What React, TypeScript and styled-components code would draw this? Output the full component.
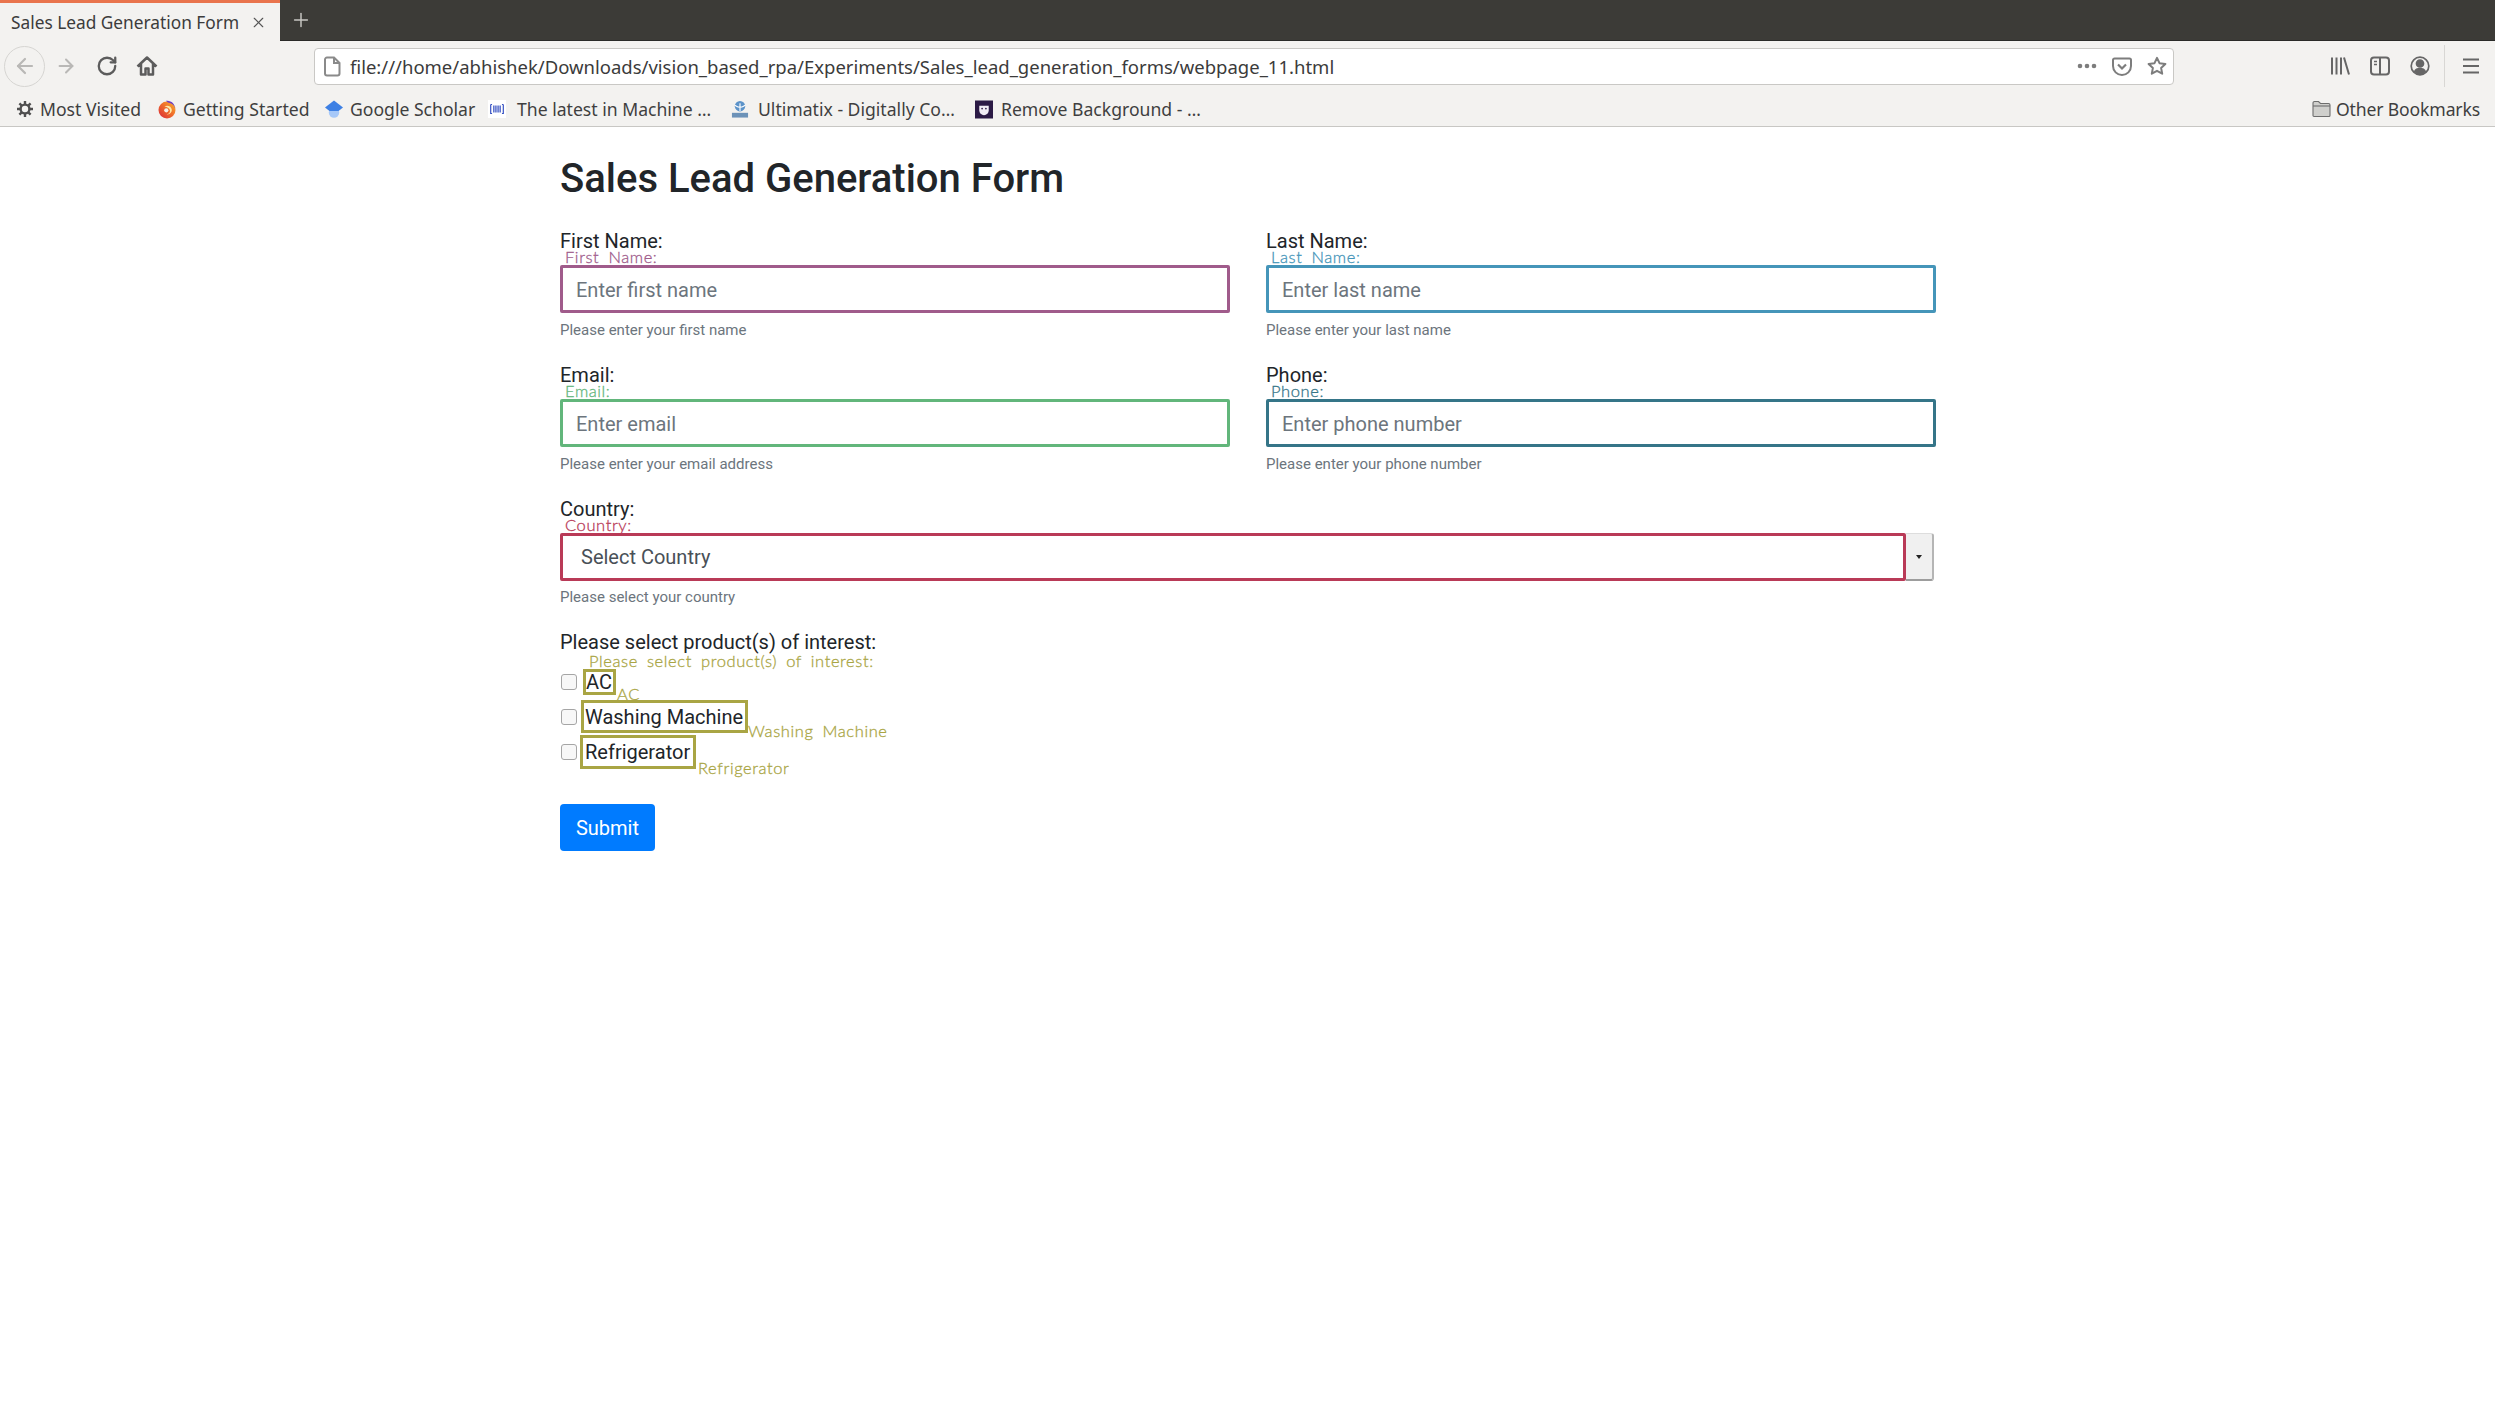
import React from "react";
import styled, { createGlobalStyle } from "styled-components";
import { ArrowLeft, ArrowRight, RotateCw, X, Plus } from "lucide-react";

const Global = createGlobalStyle`
  html, body { margin: 0; padding: 0; background: #fff; }
  body { font-family: Roboto, "Liberation Sans", sans-serif; color: #212529; }
  * { box-sizing: border-box; }
`;

const uiFont = `"Noto Sans", "Open Sans", sans-serif`;

const Page = styled.div`
  width: 2495px;
  height: 1416px;
  overflow: hidden;
  background: #fff;
`;

const TabStrip = styled.div`
  height: 41px;
  background: #3c3b37;
  border-bottom: 1px solid #2a2a28;
  display: flex;
  align-items: stretch;
`;

const Tab = styled.div`
  width: 280px;
  height: 41px;
  background: #f3f2f0;
  border-top: 3px solid #e9744d;
  display: flex;
  align-items: center;
  padding: 0 13px 0 11px;
  justify-content: space-between;
  font: 17.3px ${uiFont};
  color: #3c3c3c;
  white-space: nowrap;
`;

const NewTab = styled.div`
  width: 41px;
  display: flex;
  align-items: center;
  justify-content: center;
  color: #c8c7c3;
`;

const NavBar = styled.div`
  height: 46px;
  background: #f3f2f0;
  display: flex;
  align-items: center;
  padding: 4px 16px 0 4px;
`;

const BackButton = styled.div`
  width: 41px;
  height: 41px;
  border-radius: 50%;
  border: 1px solid #d6d5d2;
  display: flex;
  align-items: center;
  justify-content: center;
  color: #b9b8b6;
`;

const NavIcon = styled.div<{ $ml: number; $color?: string }>`
  width: 22px;
  height: 22px;
  margin-left: ${(p) => p.$ml}px;
  display: flex;
  align-items: center;
  justify-content: center;
  color: ${(p) => p.$color || "#5c5c5c"};
`;

const UrlBar = styled.div`
  width: 1860px;
  height: 37px;
  margin-left: 156px;
  background: #fff;
  border: 1px solid #c9c8c5;
  border-radius: 4px;
  display: flex;
  align-items: center;
  padding: 0 6px 0 9px;
`;

const UrlText = styled.div`
  flex: 1;
  margin-left: 9px;
  font: 18.5px ${uiFont};
  color: #3b3b3b;
  white-space: nowrap;
`;

const UrlIcon = styled.div<{ $ml: number }>`
  margin-left: ${(p) => p.$ml}px;
  display: flex;
  color: #7d7d7d;
`;

const ToolGroup = styled.div`
  margin-left: auto;
  display: flex;
  align-items: center;
  color: #666;
`;

const ToolIcon = styled.div<{ $ml: number }>`
  margin-left: ${(p) => p.$ml}px;
  display: flex;
`;

const ToolDivider = styled.div`
  width: 1px;
  height: 42px;
  background: #d8d7d4;
  margin-left: 14px;
`;

const BookmarkBar = styled.div`
  height: 40px;
  background: #f3f2f0;
  border-bottom: 1px solid #c8c7c4;
  display: flex;
  align-items: center;
  padding: 5px 15px 0 16px;
  font: 17.6px ${uiFont};
  color: #3f3f3f;
`;

const Bookmark = styled.div<{ $w: number }>`
  width: ${(p) => p.$w}px;
  display: flex;
  align-items: center;
  white-space: nowrap;
  overflow: visible;
`;

const BookmarkIcon = styled.span<{ $mr: number }>`
  width: 18px;
  height: 18px;
  margin-right: ${(p) => p.$mr}px;
  display: flex;
  flex: none;
  align-items: center;
`;

const Other = styled.div`
  margin-left: auto;
  display: flex;
  align-items: center;
  gap: 5px;
  white-space: nowrap;
  letter-spacing: -0.15px;
`;

const Form = styled.form`
  width: 1376px;
  margin-left: 560px;
  padding-top: 28px;
`;

const Title = styled.h2`
  margin: 0 0 23px;
  font: 500 40px/48px Roboto, sans-serif;
  color: #212529;
`;

const Grid = styled.div`
  display: grid;
  grid-template-columns: 670px 670px;
  column-gap: 36px;
`;

const Field = styled.div<{ $mb?: number }>`
  position: relative;
  margin-bottom: ${(p) => p.$mb ?? 19}px;
`;

const Label = styled.label<{ $mb?: number }>`
  display: block;
  font: 20px/30px Roboto, sans-serif;
  color: #212529;
  margin-bottom: ${(p) => p.$mb ?? 9}px;
`;

const Annotation = styled.span<{ $color: string }>`
  position: absolute;
  left: 5px;
  top: 22px;
  font: 300 16.5px/18px Lato, sans-serif;
  letter-spacing: 0.6px;
  word-spacing: 4px;
  color: ${(p) => p.$color};
  -webkit-text-stroke: 0.3px ${(p) => p.$color};
  white-space: nowrap;
`;

const TextInput = styled.input<{ $color: string }>`
  display: block;
  width: 100%;
  height: 48px;
  border: 3px solid ${(p) => p.$color};
  padding: 2px 13px 0;
  font: 20px Roboto, sans-serif;
  color: #495057;
  background: #fff;
  border-radius: 2px;
  outline: none;
  &::placeholder { color: #6c757d; opacity: 1; }
`;

const Help = styled.small<{ $mt?: number }>`
  display: block;
  margin-top: ${(p) => p.$mt ?? 7}px;
  font: 15px/21px Roboto, sans-serif;
  color: #6c757d;
`;

const SelectRow = styled.div`
  display: flex;
  width: 1374px;
  height: 48px;
`;

const SelectBox = styled.div<{ $color: string }>`
  flex: 1;
  border: 3px solid ${(p) => p.$color};
  border-radius: 2px;
  display: flex;
  align-items: center;
  padding-left: 18px;
  font: 20px Roboto, sans-serif;
  color: #495057;
`;

const Caret = styled.div`
  width: 28px;
  background: #f0f0f0;
  border-top: 1px solid #ddd;
  border-right: 2px solid #b5b5b5;
  border-bottom: 2px solid #9d9d9d;
  border-radius: 0 3px 3px 0;
  display: flex;
  align-items: center;
  justify-content: center;
  &::after {
    content: "";
    border-left: 3px solid transparent;
    border-right: 3px solid transparent;
    border-top: 4px solid #222;
  }
`;

const Products = styled.div`
  position: relative;
`;

const CheckRow = styled.div<{ $gap: number }>`
  display: flex;
  align-items: center;
  height: 35px;
  gap: ${(p) => p.$gap}px;
`;

const Check = styled.input`
  appearance: none;
  width: 16px;
  height: 16px;
  margin: 0 0 0 1px;
  flex: none;
  border: 1px solid #a5a5a5;
  border-radius: 3px;
  background: #f7f7f7;
`;

const CheckLabel = styled.label<{ $w: number; $h: number; $pad: number }>`
  position: relative;
  width: ${(p) => p.$w}px;
  height: ${(p) => p.$h}px;
  border: 3px solid #a9a544;
  padding-left: ${(p) => p.$pad}px;
  display: flex;
  align-items: center;
  font: 20px Roboto, sans-serif;
  color: #212529;
  white-space: nowrap;
`;

const SideNote = styled.span<{ $top: number; $left: number }>`
  position: absolute;
  left: calc(100% + ${(p) => p.$left}px);
  top: ${(p) => p.$top}px;
  font: 300 16.5px/18px Lato, sans-serif;
  letter-spacing: 0.6px;
  word-spacing: 4px;
  color: #a9a544;
  -webkit-text-stroke: 0.3px #a9a544;
  white-space: nowrap;
`;

const ProductNote = styled(Annotation)`
  left: 29px;
  top: 25px;
`;

const Submit = styled.button`
  display: block;
  margin-top: 35px;
  width: 95px;
  height: 47px;
  background: #007bff;
  color: #fff;
  border: 0;
  border-radius: 4px;
  font: 20px Roboto, sans-serif;
`;

const Svg = ({ s = 20, vb = "0 0 20 20", children }: { s?: number; vb?: string; children: React.ReactNode }) => (
  <svg width={s} height={s} viewBox={vb} fill="none" stroke="currentColor" strokeWidth="2">{children}</svg>
);

const HomeIcon = () => (
  <Svg s={22} vb="0 0 22 22">
    <path d="M1.500 11.500 11 2.500l9.500 9M5 9v10.500h4.500v-6h3v6H17V9" strokeLinejoin="round" strokeWidth="2.500" />
  </Svg>
);
const PageIcon = () => (
  <svg width="17" height="21" viewBox="0 0 17 21" fill="none" stroke="#8a8a8a" strokeWidth="2">
    <path d="M3 1.500h7l5.500 5.500v10.500a2 2 0 0 1-2 2H3a2 2 0 0 1-2-2v-14a2 2 0 0 1 2-2ZM10 1.500V7h5.500" />
  </svg>
);
const Dots = () => (
  <svg width="20" height="6" viewBox="0 0 20 6" fill="#7d7d7d"><circle cx="3" cy="3" r="2.300" /><circle cx="10" cy="3" r="2.300" /><circle cx="17" cy="3" r="2.300" /></svg>
);
const Pocket = () => (
  <svg width="20" height="19" viewBox="0 0 20 19" fill="none" stroke="#7d7d7d" strokeWidth="2">
    <path d="M2.500 1.500h15a1.500 1.500 0 0 1 1.500 1.500v6a9 9 0 0 1-18 0V3a1.500 1.500 0 0 1 1.500-1.500Z" />
    <path d="m6 7.500 4 4 4-4" strokeWidth="2.200" />
  </svg>
);
const StarIcon = () => (
  <svg width="20" height="20" viewBox="0 0 20 20" fill="none" stroke="#7d7d7d" strokeWidth="2" strokeLinejoin="round">
    <path d="m10 1.800 2.500 5.400 5.900.7-4.300 4 1.100 5.800-5.200-2.900-5.200 2.900 1.100-5.800-4.300-4 5.900-.7Z" />
  </svg>
);
const LibraryIcon = () => (
  <svg width="20" height="20" viewBox="0 0 20 20" stroke="#666" strokeWidth="2" fill="none">
    <path d="M2 1.500v17M6.500 1.500v17M11 1.500v17M14 1.500l5 17" />
  </svg>
);
const SidebarIcon = () => (
  <svg width="20" height="20" viewBox="0 0 20 20" fill="none" stroke="#666" strokeWidth="2">
    <rect x="1" y="1.500" width="18" height="17" rx="3" />
    <path d="M10 1.500v17" />
    <path d="M4 5.500h3M4 8.500h3" strokeWidth="1.500" />
  </svg>
);
const AccountIcon = () => (
  <svg width="20" height="20" viewBox="0 0 20 20" fill="none" stroke="#666" strokeWidth="1.700">
    <circle cx="10" cy="10" r="8.800" />
    <circle cx="10" cy="7.500" r="3.500" fill="#666" />
    <path d="M3.800 15.500c1-3 3.500-3.800 6.200-3.800s5.200.8 6.200 3.800A8 8 0 0 1 10 18.500a8 8 0 0 1-6.200-3Z" fill="#666" stroke="none" />
  </svg>
);
const Hamburger = () => (
  <svg width="16" height="16" viewBox="0 0 16 16" stroke="#666" strokeWidth="2.200"><path d="M0 1.500h16M0 8h16M0 14.500h16" /></svg>
);
const Gear = () => (
  <svg width="18" height="18" viewBox="0 0 18 18" fill="none" stroke="#4f4f4f">
    <circle cx="9" cy="9" r="4.400" strokeWidth="2.400" />
    <path d="M9 1v3.200M9 13.800V17M1 9h3.200M13.800 9H17M3.400 3.400l2.300 2.300M12.300 12.300l2.300 2.300M14.600 3.400l-2.300 2.300M5.700 12.300l-2.300 2.300" strokeWidth="2.400" />
  </svg>
);
const FirefoxIcon = () => (
  <svg width="18" height="19" viewBox="0 0 18 19">
    <defs>
      <linearGradient id="ffBody" x1="0" y1="1" x2="1" y2="0">
        <stop offset="0" stopColor="#d8283c" />
        <stop offset=".55" stopColor="#f0702a" />
        <stop offset="1" stopColor="#f9b52c" />
      </linearGradient>
    </defs>
    <circle cx="9" cy="10" r="8.500" fill="url(#ffBody)" />
    <path d="M8 .8c5-.8 9 3 9.300 8-.8-3-3-5.600-6.500-6C9.700 2.600 8.800 1.800 8 .8Z" fill="#6f3fc4" />
    <path d="M6.500 6.500c3-2 7-.3 7.300 3.300.2 3-2.600 5.200-5.300 4.500 2.300-.2 3.800-1.800 3.500-3.800-.3-2-2.500-3.500-5.500-4Z" fill="#fde9a8" />
    <circle cx="8.300" cy="10.300" r="2.100" fill="#f6f1ea" />
  </svg>
);
const ScholarIcon = () => (
  <svg width="18" height="18" viewBox="0 0 18 18">
    <circle cx="9" cy="12.500" r="5.200" fill="#a6c8f8" />
    <path d="M9 .5 18 7.500 13.500 11h-9L0 7.500Z" fill="#3d80e4" />
  </svg>
);
const BarcodeIcon = () => (
  <svg width="20" height="20" viewBox="0 0 20 20" fill="none" stroke="#3550c2">
    <rect width="20" height="20" fill="#fff" stroke="none" />
    <path d="M3 5v10h1.500M3 5h1.500M17 5v10h-1.500M17 5h-1.500" strokeWidth="1.300" />
    <path d="M6.500 6v8M8.800 6v8M11.200 6v8M13.500 6v8" strokeWidth="1.400" />
  </svg>
);
const TataIcon = () => (
  <svg width="19" height="19" viewBox="0 0 19 19">
    <circle cx="9.500" cy="6" r="5.500" fill="#5c93c9" />
    <path d="M4 5c2 1 3 2 5.500 2S13 6 15 5M9.500 3v8" stroke="#fff" fill="none" strokeWidth="1.200" />
    <rect x="1" y="13" width="17" height="5" fill="#6c92b8" />
  </svg>
);
const RemoveBgIcon = () => (
  <svg width="19" height="19" viewBox="0 0 19 19">
    <rect width="19" height="19" fill="#2b1a45" />
    <path d="M4.500 5.500h10v5a5 5 0 0 1-10 0Z" fill="#f1edf5" />
    <circle cx="7.500" cy="8.500" r=".9" fill="#2b1a45" />
    <circle cx="11.500" cy="8.500" r=".9" fill="#2b1a45" />
  </svg>
);
const FolderIcon = () => (
  <svg width="19" height="18" viewBox="0 0 19 18" fill="#cfcfcc" stroke="#6d6d6d" strokeWidth="1.100">
    <path d="M1 3a1.500 1.500 0 0 1 1.500-1.500h4l2 2h8A1.500 1.500 0 0 1 18 5v10.500a1 1 0 0 1-1 1H2a1 1 0 0 1-1-1Z" />
    <path d="M1 6h17" />
  </svg>
);

const C = {
  first: "#a05b8b",
  last: "#4595b9",
  email: "#62b67b",
  phone: "#357588",
  country: "#b93a57",
  product: "#a9a544",
};

type FieldDef = { label: string; ph: string; help: string; color: string };
const fields: FieldDef[] = [
  { label: "First Name:", ph: "Enter first name", help: "Please enter your first name", color: C.first },
  { label: "Last Name:", ph: "Enter last name", help: "Please enter your last name", color: C.last },
  { label: "Email:", ph: "Enter email", help: "Please enter your email address", color: C.email },
  { label: "Phone:", ph: "Enter phone number", help: "Please enter your phone number", color: C.phone },
];

const products = [
  { name: "AC", w: 33, h: 26, pad: 0, gap: 6, top: 13, left: 4 },
  { name: "Washing Machine", w: 167, h: 33, pad: 1, gap: 4, top: 19, left: 3 },
  { name: "Refrigerator", w: 116, h: 34, pad: 2, gap: 3, top: 21, left: 5 },
];

export default function App() {
  return (
    <Page>
      <Global />
      <TabStrip>
        <Tab>
          Sales Lead Generation Form
          <X size={17} strokeWidth={1.600} color="#555" />
        </Tab>
        <NewTab><Plus size={22} strokeWidth={1.600} /></NewTab>
      </TabStrip>
      <NavBar>
        <BackButton><ArrowLeft size={24} strokeWidth={2.200} /></BackButton>
        <NavIcon $ml={10} $color="#b9b8b6"><ArrowRight size={24} strokeWidth={2.200} /></NavIcon>
        <NavIcon $ml={19}><RotateCw size={22} strokeWidth={2.500} /></NavIcon>
        <NavIcon $ml={18}><HomeIcon /></NavIcon>
        <UrlBar>
          <PageIcon />
          <UrlText>file:///home/abhishek/Downloads/vision_based_rpa/Experiments/Sales_lead_generation_forms/webpage_11.html</UrlText>
          <UrlIcon $ml={0}><Dots /></UrlIcon>
          <UrlIcon $ml={15}><Pocket /></UrlIcon>
          <UrlIcon $ml={15}><StarIcon /></UrlIcon>
        </UrlBar>
        <ToolGroup>
          <ToolIcon $ml={0}><LibraryIcon /></ToolIcon>
          <ToolIcon $ml={20}><SidebarIcon /></ToolIcon>
          <ToolIcon $ml={20}><AccountIcon /></ToolIcon>
          <ToolDivider />
          <ToolIcon $ml={18}><Hamburger /></ToolIcon>
        </ToolGroup>
      </NavBar>
      <BookmarkBar>
        <Bookmark $w={142}><BookmarkIcon $mr={6}><Gear /></BookmarkIcon>Most Visited</Bookmark>
        <Bookmark $w={167}><BookmarkIcon $mr={7}><FirefoxIcon /></BookmarkIcon>Getting Started</Bookmark>
        <Bookmark $w={163}><BookmarkIcon $mr={7}><ScholarIcon /></BookmarkIcon>Google Scholar</Bookmark>
        <Bookmark $w={243}><BookmarkIcon $mr={11}><BarcodeIcon /></BookmarkIcon>The latest in Machine …</Bookmark>
        <Bookmark $w={244}><BookmarkIcon $mr={9}><TataIcon /></BookmarkIcon>Ultimatix - Digitally Co…</Bookmark>
        <Bookmark $w={225}><BookmarkIcon $mr={8}><RemoveBgIcon /></BookmarkIcon>Remove Background - …</Bookmark>
        <Other><FolderIcon />Other Bookmarks</Other>
      </BookmarkBar>
      <Form>
        <Title>Sales Lead Generation Form</Title>
        <Grid>
          {fields.map((f) => (
            <Field key={f.label}>
              <Label>{f.label}</Label>
              <Annotation $color={f.color}>{f.label}</Annotation>
              <TextInput $color={f.color} placeholder={f.ph} readOnly />
              <Help>{f.help}</Help>
            </Field>
          ))}
        </Grid>
        <Field $mb={19}>
          <Label>Country:</Label>
          <Annotation $color={C.country}>Country:</Annotation>
          <SelectRow>
            <SelectBox $color={C.country}>Select Country</SelectBox>
            <Caret />
          </SelectRow>
          <Help $mt={6}>Please select your country</Help>
        </Field>
        <Products>
          <Label $mb={7}>Please select product(s) of interest:</Label>
          <ProductNote $color={C.product}>Please select product(s) of interest:</ProductNote>
          {products.map((p) => (
            <CheckRow key={p.name} $gap={p.gap}>
              <Check type="checkbox" />
              <CheckLabel $w={p.w} $h={p.h} $pad={p.pad}>
                {p.name}
                <SideNote $top={p.top} $left={p.left}>{p.name}</SideNote>
              </CheckLabel>
            </CheckRow>
          ))}
        </Products>
        <Submit type="button">Submit</Submit>
      </Form>
    </Page>
  );
}
